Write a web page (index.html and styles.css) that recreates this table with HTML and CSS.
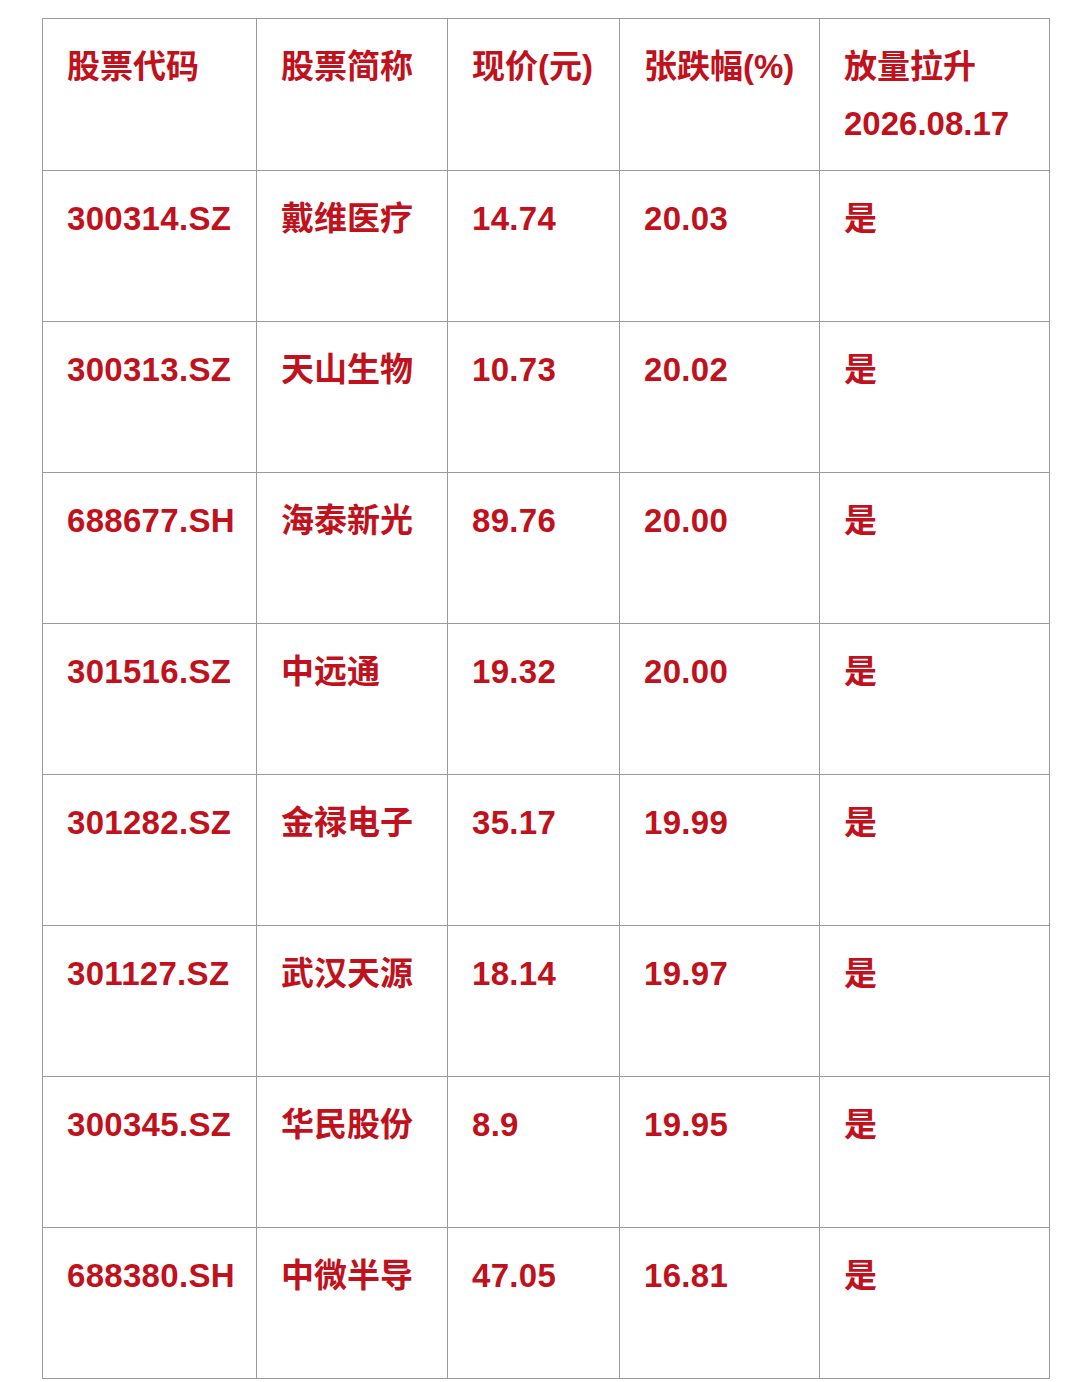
FILE: index.html
```html
<!DOCTYPE html>
<html lang="zh-CN">
<head>
<meta charset="utf-8">
<title>放量拉升</title>
<link rel="stylesheet" href="styles.css">
</head>
<body>
<div class="page">
<table class="stocks">
  <colgroup>
    <col class="c1"><col class="c2"><col class="c3"><col class="c4"><col class="c5">
  </colgroup>
  <thead>
    <tr class="head">
      <th>股票代码</th>
      <th>股票简称</th>
      <th>现价(元)</th>
      <th>张跌幅(%)</th>
      <th>放量拉升<br>2026.08.17</th>
    </tr>
  </thead>
  <tbody>
    <tr><td><span class="num">300314.SZ</span></td><td>戴维医疗</td><td><span class="num">14.74</span></td><td><span class="num">20.03</span></td><td>是</td></tr>
    <tr><td><span class="num">300313.SZ</span></td><td>天山生物</td><td><span class="num">10.73</span></td><td><span class="num">20.02</span></td><td>是</td></tr>
    <tr><td><span class="num">688677.SH</span></td><td>海泰新光</td><td><span class="num">89.76</span></td><td><span class="num">20.00</span></td><td>是</td></tr>
    <tr><td><span class="num">301516.SZ</span></td><td>中远通</td><td><span class="num">19.32</span></td><td><span class="num">20.00</span></td><td>是</td></tr>
    <tr><td><span class="num">301282.SZ</span></td><td>金禄电子</td><td><span class="num">35.17</span></td><td><span class="num">19.99</span></td><td>是</td></tr>
    <tr><td><span class="num">301127.SZ</span></td><td>武汉天源</td><td><span class="num">18.14</span></td><td><span class="num">19.97</span></td><td>是</td></tr>
    <tr><td><span class="num">300345.SZ</span></td><td>华民股份</td><td><span class="num">8.9</span></td><td><span class="num">19.95</span></td><td>是</td></tr>
    <tr><td><span class="num">688380.SH</span></td><td>中微半导</td><td><span class="num">47.05</span></td><td><span class="num">16.81</span></td><td>是</td></tr>
  </tbody>
</table>
</div>
</body>
</html>
```
FILE: styles.css
```css
html, body {
  margin: 0;
  padding: 0;
  background: #ffffff;
}
.page {
  padding: 18px 0 0 42px;
}
.stocks {
  border-collapse: collapse;
  table-layout: fixed;
  width: 1007px;
  font-family: "Liberation Sans", "Noto Sans CJK SC", sans-serif;
  font-weight: bold;
  font-size: 33px;
  color: #c0111c;
}
.c1 { width: 214px; }
.c2 { width: 191px; }
.c3 { width: 172px; }
.c4 { width: 200px; }
.c5 { width: 230px; }
.stocks th,
.stocks td {
  border: 1px solid #9c9a9a;
  text-align: left;
  vertical-align: top;
  padding: 19px 10px 0 24px;
  line-height: 57px;
  font-weight: bold;
  white-space: nowrap;
}
.num {
  letter-spacing: 0.3px;
}
.head {
  height: 152px;
}
.stocks tbody tr {
  height: 151px;
}
```
